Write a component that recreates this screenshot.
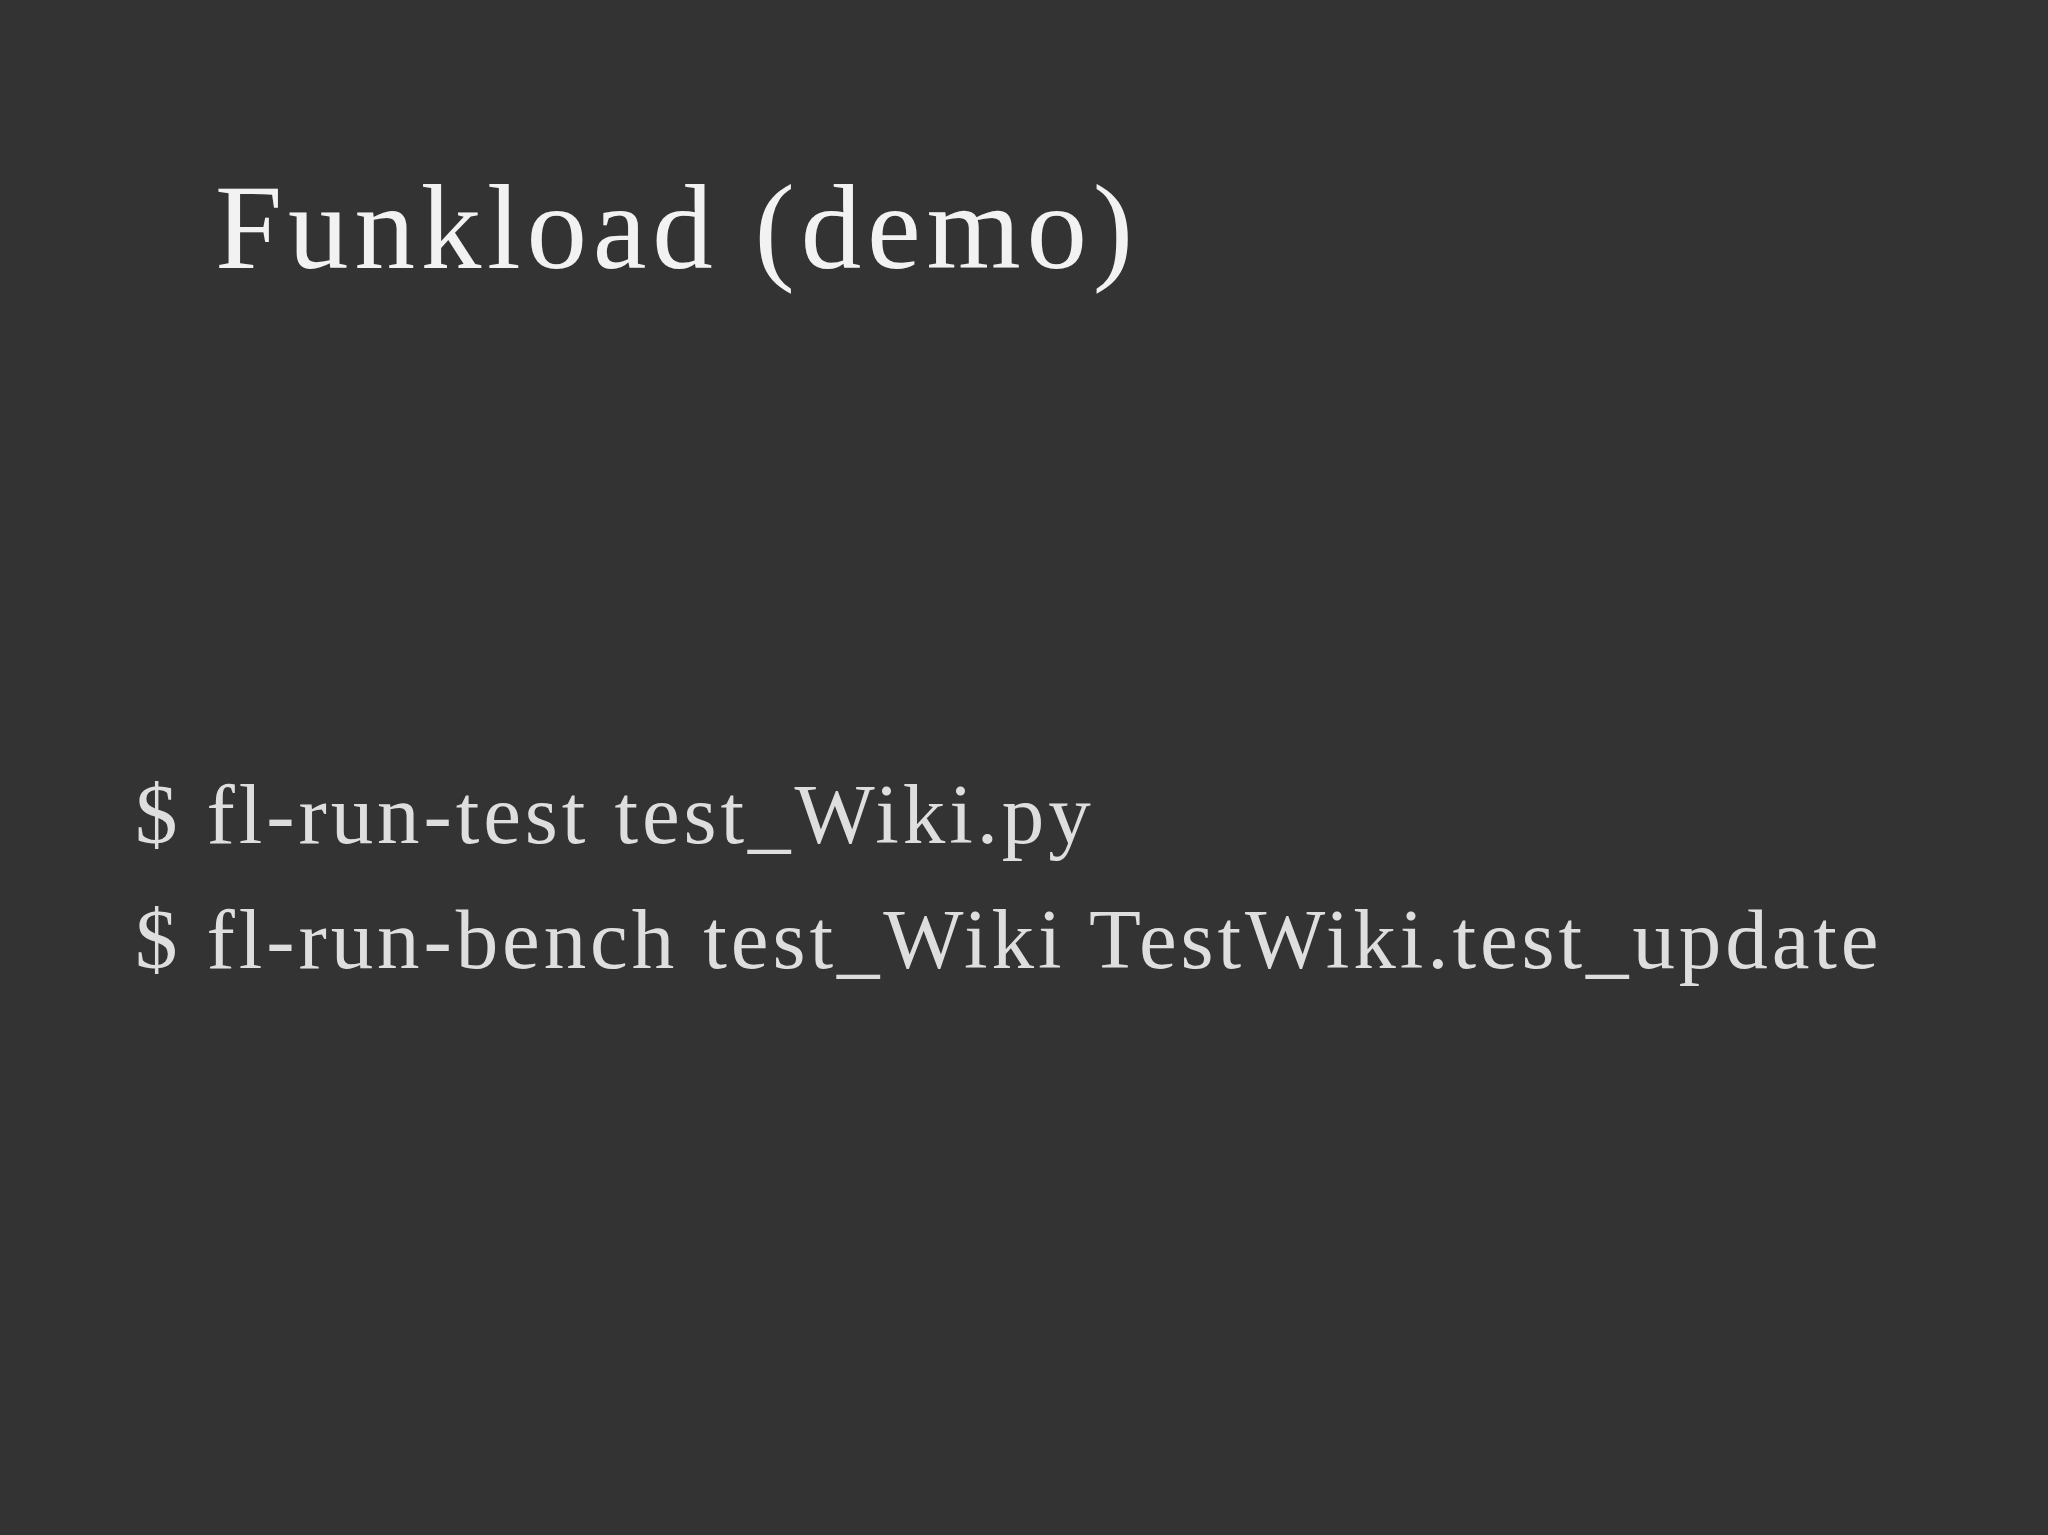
export default function App() {
  return (
    <div className="w-[2048px] h-[1535px] bg-[#333333] overflow-hidden" style={{ fontFamily: '"Liberation Serif", "Times New Roman", serif' }}>
      <div className="pt-[167px] pl-[215px]">
        <h1 className="text-[121px] leading-none font-normal text-[#f2f2f2] tracking-[5.8px] whitespace-nowrap">
          Funkload (demo)
        </h1>
      </div>

      <div className="mt-[464px] pl-[135px] text-[85px] leading-[125px] text-[#dedede] tracking-[3.9px] whitespace-nowrap">
        <p>$ fl-run-test test_Wiki.py</p>
        <p>$ fl-run-bench test_Wiki TestWiki.test_update</p>
      </div>
    </div>
  );
}
